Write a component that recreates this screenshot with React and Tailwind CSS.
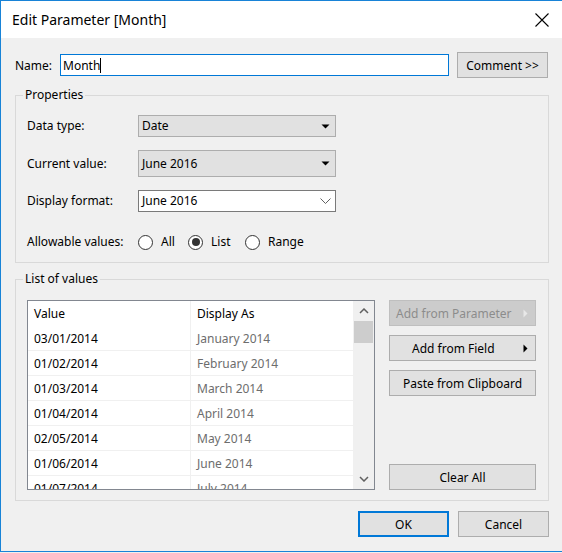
import React from "react";

const rows = [
  ["03/01/2014", "January 2014"],
  ["01/02/2014", "February 2014"],
  ["01/03/2014", "March 2014"],
  ["01/04/2014", "April 2014"],
  ["02/05/2014", "May 2014"],
  ["01/06/2014", "June 2014"],
  ["01/07/2014", "July 2014"],
];

const DownTri = ({ color = "#000" }) => (
  <svg width="9" height="5" viewBox="0 0 9 5">
    <path d="M0.5 0.5 L8.5 0.5 L4.5 4.5 Z" fill={color} />
  </svg>
);

const RightTri = ({ color = "#000" }) => (
  <svg width="5" height="9" viewBox="0 0 5 9">
    <path d="M0.5 0.5 L4.5 4.5 L0.5 8.5 Z" fill={color} />
  </svg>
);

const Radio = ({ checked, label, width }) => (
  <div className={`flex items-center ${width}`}>
    <span className="w-[15px] h-[15px] rounded-full border border-[#333] bg-white flex items-center justify-center">
      {checked && <span className="w-[8px] h-[8px] rounded-full bg-[#333]" />}
    </span>
    <span className="ml-[8px]">{label}</span>
  </div>
);

const Btn = ({ children, className = "" }) => (
  <button className={`h-[26px] pt-[1px] bg-[#e1e1e1] border border-[#adadad] text-black ${className}`}>
    {children}
  </button>
);

export default function App() {
  return (
    <div className="w-[562px] h-[553px] bg-[#f0f0f0] overflow-hidden font-['Noto_Sans',sans-serif] text-[12px] text-black">
      <div className="w-[563px] h-[552px] border border-[#1883d7] flex flex-col">
        {/* title bar */}
        <div className="h-[37px] bg-white flex items-center justify-between pl-[11px] pr-[13px] shrink-0">
          <span className="text-[14px] leading-none">Edit Parameter [Month]</span>
          <svg width="14" height="14" viewBox="0 0 14 14">
            <path d="M0.5 0.5 L13.5 13.5 M13.5 0.5 L0.5 13.5" stroke="#000" strokeWidth="1.1" />
          </svg>
        </div>

        <div className="flex-1 bg-[#f0f0f0] pl-[14px]">
          {/* name row */}
          <div className="flex items-center mt-[14px] h-[26px]">
            <span className="w-[45px] pt-[1px]">Name:</span>
            <div className="w-[389px] h-[22px] bg-white border border-[#0078d7] flex items-center pl-[2px] pt-[1px]">
              <span>Month</span>
              <span className="w-px h-[15px] bg-black" />
            </div>
            <Btn className="ml-[8px] w-[91px]">Comment &gt;&gt;</Btn>
          </div>

          {/* properties */}
          <fieldset className="mt-[9px] w-[534px] border border-[#d9d9d9] pb-[12px]">
            <legend className="ml-[7px] px-[2px] leading-[16px]">Properties</legend>
            <div className="pl-[11px]">
              <div className="flex items-center mt-[12px]">
                <span className="w-[111px]">Data type:</span>
                <div className="w-[198px] h-[22px] bg-[#e1e1e1] border border-[#adadad] flex items-center justify-between pl-[3px] pr-[5px]">
                  <span>Date</span>
                  <DownTri />
                </div>
              </div>
              <div className="flex items-center mt-[13px]">
                <span className="w-[111px]">Current value:</span>
                <div className="w-[198px] h-[27px] bg-[#e1e1e1] border border-[#adadad] flex items-center justify-between pl-[3px] pr-[5px]">
                  <span>June 2016</span>
                  <DownTri />
                </div>
              </div>
              <div className="flex items-center mt-[13px]">
                <span className="w-[111px]">Display format:</span>
                <div className="w-[198px] h-[22px] bg-white border border-[#7a7a7a] flex items-center justify-between pl-[3px] pr-[4px]">
                  <span>June 2016</span>
                  <svg width="11" height="6" viewBox="0 0 11 6">
                    <path d="M0.5 0.5 L5.5 5.5 L10.5 0.5" fill="none" stroke="#606060" strokeWidth="1" />
                  </svg>
                </div>
              </div>
              <div className="flex items-center mt-[22px] h-[16px]">
                <span className="w-[111px]">Allowable values:</span>
                <Radio label="All" width="w-[50px]" />
                <Radio label="List" checked width="w-[57px]" />
                <Radio label="Range" width="w-[60px]" />
              </div>
            </div>
          </fieldset>

          {/* list of values */}
          <fieldset className="mt-[8px] w-[534px] border border-[#d9d9d9] pb-[10px]">
            <legend className="ml-[7px] px-[2px] leading-[16px]">List of values</legend>
            <div className="pl-[11px] mt-[13px] flex">
              <div className="w-[348px] h-[190px] border border-[#828790] bg-white flex overflow-hidden">
                <div className="w-[325px] overflow-hidden">
                  <div className="flex h-[25px] items-center">
                    <div className="w-[163px] h-full border-r border-[#f0f0f0] flex items-center pl-[6px] pt-[1px]">Value</div>
                    <div className="flex-1 h-full flex items-center pl-[6px] pt-[1px]">Display As</div>
                  </div>
                  {rows.map(([v, d]) => (
                    <div key={v} className="flex h-[25px] border-b border-[#f0f0f0]">
                      <div className="w-[163px] border-r border-[#f0f0f0] flex items-center pl-[6px] pt-[2px]">{v}</div>
                      <div className="flex-1 flex items-center pl-[6px] pt-[2px] text-[#6d6d6d]">{d}</div>
                    </div>
                  ))}
                </div>
                <div className="w-[21px] bg-[#f0f0f0] flex flex-col">
                  <div className="h-[20px] flex items-center justify-center">
                    <svg width="10" height="6" viewBox="0 0 10 6">
                      <path d="M1 5 L5 1 L9 5" fill="none" stroke="#606060" strokeWidth="1.5" />
                    </svg>
                  </div>
                  <div className="ml-[1px] w-[19px] h-[22px] bg-[#cdcdcd]" />
                  <div className="flex-1" />
                  <div className="h-[20px] flex items-center justify-center">
                    <svg width="10" height="6" viewBox="0 0 10 6">
                      <path d="M1 1 L5 5 L9 1" fill="none" stroke="#606060" strokeWidth="1.5" />
                    </svg>
                  </div>
                </div>
              </div>

              <div className="ml-[14px] w-[147px] flex flex-col justify-between">
                <div className="flex flex-col gap-[9px]">
                  <button className="h-[26px] pt-[1px] bg-[#cccccc] border border-[#bfbfbf] text-[#8c8c8c] flex items-center justify-between pl-[6px] pr-[7px]">
                    <span>Add from Parameter</span>
                    <RightTri color="#e8e8e8" />
                  </button>
                  <button className="h-[26px] pt-[1px] bg-[#e1e1e1] border border-[#adadad] flex items-center justify-between pl-[22px] pr-[7px]">
                    <span>Add from Field</span>
                    <RightTri />
                  </button>
                  <Btn>Paste from Clipboard</Btn>
                </div>
                <Btn>Clear All</Btn>
              </div>
            </div>
          </fieldset>

          {/* footer */}
          <div className="w-[534px] mt-[10px] flex justify-end gap-[9px]">
            <button className="w-[91px] h-[26px] pt-[1px] bg-[#e1e1e1] border-2 border-[#0078d7]">OK</button>
            <Btn className="w-[91px]">Cancel</Btn>
          </div>
        </div>
      </div>
    </div>
  );
}
